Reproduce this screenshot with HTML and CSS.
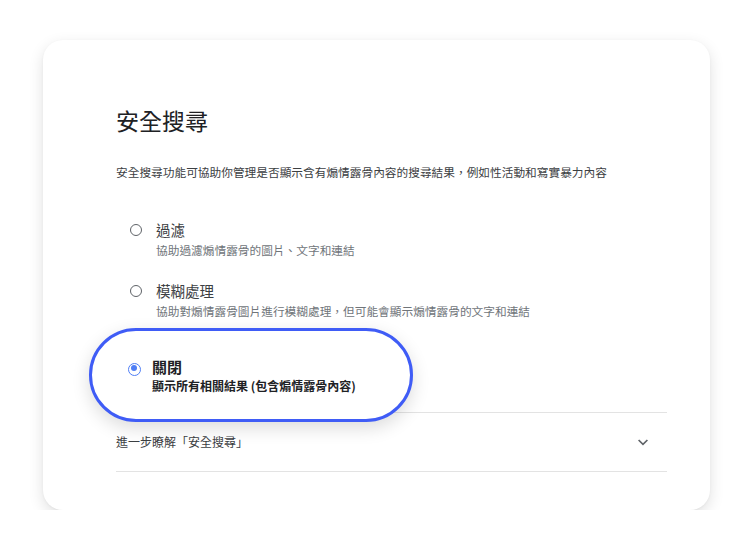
FILE: index.html
```html
<!DOCTYPE html>
<html lang="zh-Hant">
<head>
<meta charset="utf-8">
<title>安全搜尋</title>
<link rel="stylesheet" href="styles.css">
</head>
<body>
<main class="card">
  <h1 class="title">安全搜尋</h1>
  <p class="desc">安全搜尋功能可協助你管理是否顯示含有煽情露骨內容的搜尋結果，例如性活動和寫實暴力內容</p>
  <div class="options">
    <div class="option">
      <span class="radio"></span>
      <div class="texts">
        <div class="label">過濾</div>
        <div class="sub">協助過濾煽情露骨的圖片、文字和連結</div>
      </div>
    </div>
    <div class="option">
      <span class="radio"></span>
      <div class="texts">
        <div class="label">模糊處理</div>
        <div class="sub">協助對煽情露骨圖片進行模糊處理，但可能會顯示煽情露骨的文字和連結</div>
      </div>
    </div>
    <div class="option selected">
      <span class="radio checked"></span>
      <div class="texts">
        <div class="label">關閉</div>
        <div class="sub">顯示所有相關結果 (包含煽情露骨內容)</div>
      </div>
    </div>
  </div>
  <div class="more">
    <span class="more-text">進一步瞭解「安全搜尋」</span>
    <svg class="chev" width="24" height="24" viewBox="0 0 24 24"><polyline points="7.6,10 12,14.3 16.4,10" fill="none" stroke="#5f6368" stroke-width="1.7"/></svg>
  </div>
</main>
</body>
</html>
```

FILE: styles.css
```css
html, body {
  margin: 0;
  padding: 0;
  background: #ffffff;
}
body {
  font-family: "Noto Sans CJK TC", "Noto Sans", Roboto, sans-serif;
  color: #202124;
  padding-top: 40px;
  padding-left: 43px;
}
.card {
  width: 667px;
  box-sizing: border-box;
  padding: 65px 43px 38px 73px;
  background: #fff;
  border-radius: 20px;
  box-shadow: 0 5px 15px rgba(0, 0, 0, 0.12), 0 1px 3px rgba(0, 0, 0, 0.04);
}
.title {
  margin: 0;
  font-size: 23px;
  line-height: 30px;
  font-weight: 400;
  color: #202124;
}
.desc {
  margin: 29px 0 0;
  font-size: 11.7px;
  line-height: 16px;
  color: #3c4043;
}
.options {
  margin-top: 40px;
  padding-left: 14px;
  display: flex;
  flex-direction: column;
}
.option {
  display: flex;
  align-items: flex-start;
  gap: 14px;
}
.option + .option {
  margin-top: 23px;
}
.radio {
  width: 12px;
  height: 12px;
  box-sizing: border-box;
  border: 1.7px solid #5f6368;
  border-radius: 50%;
  margin-top: 4px;
  flex: none;
}
.radio.checked {
  width: 13px;
  height: 13px;
  border-color: #4f7ef5;
  position: relative;
}
.radio.checked::after {
  content: "";
  position: absolute;
  left: 1.8px;
  top: 1.8px;
  width: 6px;
  height: 6px;
  border-radius: 50%;
  background: #4f7ef5;
}
.texts {
  display: flex;
  flex-direction: column;
  gap: 2px;
}
.label {
  font-size: 14.5px;
  line-height: 20px;
  color: #3c4043;
}
.sub {
  font-size: 11.7px;
  line-height: 16px;
  color: #70757a;
}
.option.selected {
  position: relative;
  z-index: 1;
  margin-top: 9px;
  margin-left: -41px;
  margin-bottom: -10px;
  width: 324px;
  height: 94px;
  box-sizing: border-box;
  border: 3.5px solid #3f5cf6;
  border-radius: 47px;
  background: #fff;
  padding-left: 36px;
  gap: 11px;
  align-items: center;
  box-shadow: 0 6px 18px rgba(0, 0, 0, 0.14);
}
.option.selected .radio {
  margin-top: -12px;
}
.option.selected .texts {
  gap: 1px;
  margin-top: 1px;
}
.option.selected .label {
  font-size: 15px;
  font-weight: 700;
  color: #202124;
}
.option.selected .sub {
  font-size: 12px;
  font-weight: 700;
  color: #202124;
}
.more {
  display: flex;
  align-items: center;
  justify-content: space-between;
  height: 58px;
  border-top: 1px solid #e3e3e3;
  border-bottom: 1px solid #e3e3e3;
  padding-right: 12px;
}
.more-text {
  font-size: 12px;
  line-height: 16px;
  color: #3c4043;
}
.chev {
  display: block;
}
```
